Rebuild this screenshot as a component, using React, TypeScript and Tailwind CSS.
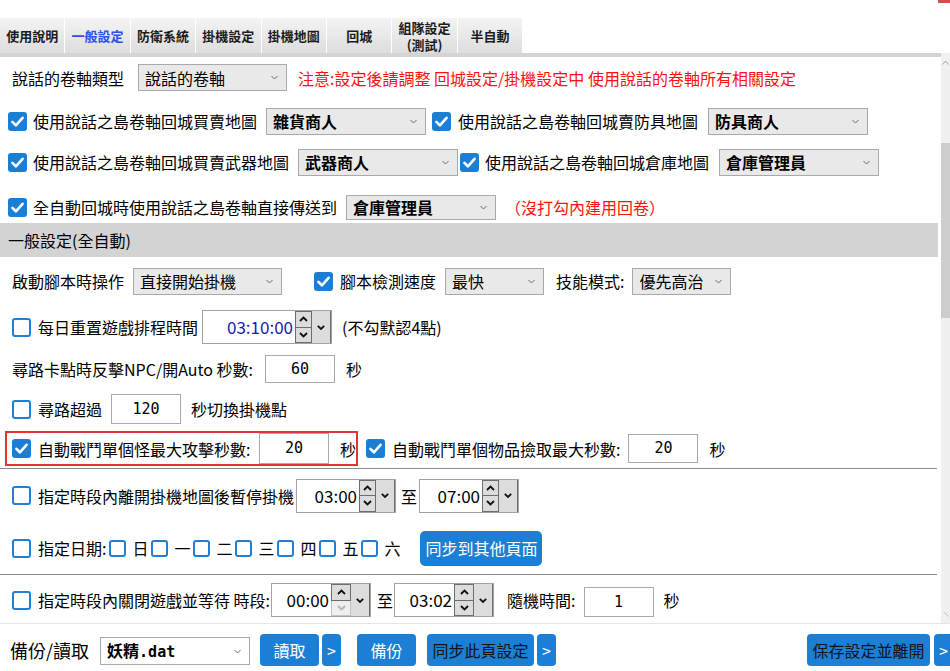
import React from "react";

const FONT = "font-['Noto_Sans_CJK_TC','Noto_Sans_CJK_SC',sans-serif]";
const MONO = "font-['DejaVu_Sans_Mono',monospace]";

function Tick() {
  return (
    <svg viewBox="0 0 19 19" className="w-full h-full">
      <path d="M4.4 9.9 L7.9 13.3 L14.6 5.8" fill="none" stroke="#fff" strokeWidth="2.6" strokeLinecap="round" strokeLinejoin="round" />
    </svg>
  );
}

function Box({ on, small }: { on?: boolean; small?: boolean }) {
  const size = small ? "w-[17px] h-[17px]" : "w-[19px] h-[19px]";
  return on ? (
    <span className={`${size} shrink-0 rounded-[3px] bg-[#1a7fd4] flex`}>
      <Tick />
    </span>
  ) : (
    <span className={`${size} shrink-0 rounded-[3px] border-2 border-[#1f7fd6] bg-white`} />
  );
}

function Txt({ children, className = "" }: { children: React.ReactNode; className?: string }) {
  return <span className={`text-[16px] leading-[20px] whitespace-nowrap shrink-0 ${className}`}>{children}</span>;
}

function Pick({
  value,
  bold,
  className = "",
  white,
}: {
  value: React.ReactNode;
  bold?: boolean;
  className?: string;
  white?: boolean;
}) {
  return (
    <div
      className={`flex items-center justify-between border border-[#a9a9a9] pl-[6px] pr-[8px] shrink-0 ${
        white ? "bg-white" : "bg-[#e9e9e9]"
      } ${className}`}
    >
      <span className={`text-[16px] leading-[20px] whitespace-nowrap ${bold ? "font-bold" : ""}`}>{value}</span>
      <svg width="7" height="5" viewBox="0 0 7 5">
        <path d="M0.5 1 L3.5 4 L6.5 1" fill="none" stroke="#666" strokeWidth="1" />
      </svg>
    </div>
  );
}

function Num({ value, className = "" }: { value: string; className?: string }) {
  return (
    <div
      className={`w-[70px] border border-[#a9a9a9] bg-white flex items-center justify-center ${MONO} text-[15px] shrink-0 ${className}`}
    >
      {value}
    </div>
  );
}

function Chev({ up, off }: { up?: boolean; off?: boolean }) {
  return (
    <svg width="9" height="6" viewBox="0 0 9 6">
      <path
        d={up ? "M1 5 L4.5 1.5 L8 5" : "M1 1 L4.5 4.5 L8 1"}
        fill="none"
        stroke={off ? "#b5b5b5" : "#111"}
        strokeWidth="1.8"
      />
    </svg>
  );
}

function Time({
  value,
  className = "",
  blue,
  downOff,
  spin = "w-[17px]",
}: {
  value: string;
  className?: string;
  blue?: boolean;
  downOff?: boolean;
  spin?: string;
}) {
  return (
    <div className={`flex h-[34px] border border-[#a3a3a3] bg-white shrink-0 ${className}`}>
      <div
        className={`flex-1 flex items-center justify-end pr-[2px] text-[17px] leading-[20px] ${
          blue ? "text-[#1a1aa8]" : "text-black"
        }`}
      >
        {value}
      </div>
      <div className={`${spin} flex flex-col`}>
        <div className="flex-1 border border-[#6d6d6d] bg-[#dcdcdc] flex items-center justify-center">
          <Chev up />
        </div>
        <div
          className={`flex-1 border border-t-0 flex items-center justify-center ${
            downOff ? "border-[#c4c4c4] bg-[#efefef]" : "border-[#6d6d6d] bg-[#dcdcdc]"
          }`}
        >
          <Chev off={downOff} />
        </div>
      </div>
      <div className="w-[19px] bg-[#dcdcdc] border-r border-[#6d6d6d] flex items-center justify-center">
        <svg width="8" height="5" viewBox="0 0 8 5">
          <path d="M0.8 0.8 L4 4 L7.2 0.8" fill="none" stroke="#111" strokeWidth="1.8" />
        </svg>
      </div>
    </div>
  );
}

function Btn({
  children,
  className = "",
  dark,
}: {
  children: React.ReactNode;
  className?: string;
  dark?: boolean;
}) {
  return (
    <div
      className={`h-[32px] rounded-[4px] bg-[#1b7fd6] flex items-center justify-center text-[16px] leading-[20px] whitespace-nowrap shrink-0 ${
        dark ? "text-[#141414]" : "text-white"
      } ${className}`}
    >
      {children}
    </div>
  );
}

const tabs: { label: React.ReactNode; active?: boolean }[] = [
  { label: "使用說明" },
  { label: "一般設定", active: true },
  { label: "防衛系統" },
  { label: "掛機設定" },
  { label: "掛機地圖" },
  { label: "回城" },
  {
    label: (
      <>
        <span className="block">組隊設定</span>
        <span className="block">(測試)</span>
      </>
    ),
  },
  { label: "半自動" },
];

const days = ["日", "一", "二", "三", "四", "五", "六"];

export default function App() {
  return (
    <div className={`w-[950px] h-[671px] bg-white text-black overflow-hidden flex flex-col ${FONT}`}>
      {/* window top edge */}
      <div className="h-[18px] flex justify-end shrink-0">
        <div className="w-[12px] h-[3px] bg-[#d05050]" />
      </div>

      {/* tab strip */}
      <div className="h-[35px] flex shrink-0">
        {tabs.map((t, i) => (
          <div
            key={i}
            className={`w-[65.4px] h-full border-r border-white bg-linear-to-b from-[#f4f4f4] to-[#dddddd] flex flex-col items-center justify-center text-center text-[13px] leading-[17px] font-bold ${
              t.active ? "text-[#2f4fe8]" : "text-[#1c1c1c]"
            }`}
          >
            {t.label}
          </div>
        ))}
      </div>

      {/* scrolling settings area */}
      <div className="h-[570px] flex shrink-0">
        <div className="w-[941px] flex flex-col">
          <div className="h-[4px] bg-[#d4d4d4] shrink-0" />
          <div className="w-[938px] flex flex-col">
            {/* scroll type */}
            <div className="h-[41px] flex items-center pl-[12px]">
              <Txt>說話的卷軸類型</Txt>
              <Pick value="說話的卷軸" className="ml-[14px] w-[149px] h-[27px]" />
              <Txt className="ml-[11px] text-[#ff1010]">注意:設定後請調整 回城設定/掛機設定中 使用說話的卷軸所有相關設定</Txt>
            </div>

            <div className="h-[46px] flex items-center pl-[8px]">
              <Box on />
              <Txt className="ml-[6px]">使用說話之島卷軸回城買賣地圖</Txt>
              <Pick value="雜貨商人" bold className="ml-[9px] w-[160px] h-[27px]" />
              <span className="ml-[6px]">
                <Box on />
              </span>
              <Txt className="ml-[7px]">使用說話之島卷軸回城賣防具地圖</Txt>
              <Pick value="防具商人" bold className="ml-[10px] w-[160px] h-[27px]" />
            </div>

            <div className="h-[36px] flex items-center pl-[8px]">
              <Box on />
              <Txt className="ml-[6px]">使用說話之島卷軸回城買賣武器地圖</Txt>
              <Pick value="武器商人" bold className="ml-[9px] w-[160px] h-[27px]" />
              <span className="ml-[2px]">
                <Box on />
              </span>
              <Txt className="ml-[6px]">使用說話之島卷軸回城倉庫地圖</Txt>
              <Pick value="倉庫管理員" bold className="ml-[10px] w-[160px] h-[27px]" />
            </div>

            <div className="h-[43px] flex items-center pl-[8px] pt-[11px]">
              <Box on />
              <Txt className="ml-[6px]">全自動回城時使用說話之島卷軸直接傳送到</Txt>
              <Pick value="倉庫管理員" bold className="ml-[9px] w-[150px] h-[25px]" />
              <Txt className="ml-[9px] text-[#ff1010]">（沒打勾內建用回卷）</Txt>
            </div>

            {/* section header */}
            <div className="h-[34px] bg-[#d3d3d3] flex items-center pl-[8px]">
              <Txt>一般設定(全自動)</Txt>
            </div>

            <div className="h-[48px] flex items-center pl-[12px]">
              <Txt>啟動腳本時操作</Txt>
              <Pick value="直接開始掛機" className="ml-[9px] w-[149px] h-[27px]" />
              <span className="ml-[32px]">
                <Box on />
              </span>
              <Txt className="ml-[7px]">腳本檢測速度</Txt>
              <Pick value="最快" className="ml-[9px] w-[99px] h-[27px]" />
              <Txt className="ml-[12px]">技能模式:</Txt>
              <Pick value="優先高治" className="ml-[8px] w-[99px] h-[27px]" />
            </div>

            <div className="h-[44px] flex items-center pl-[12px]">
              <Box />
              <Txt className="ml-[7px]">每日重置遊戲排程時間</Txt>
              <Time value="03:10:00" blue className="ml-[4px] w-[130px]" />
              <Txt className="ml-[10px]">(不勾默認4點)</Txt>
            </div>

            <div className="h-[40px] flex items-center pl-[12px]">
              <Txt className="w-[253px]">尋路卡點時反擊NPC/開Auto 秒數:</Txt>
              <Num value="60" className="h-[28px]" />
              <Txt className="ml-[11px]">秒</Txt>
            </div>

            <div className="h-[40px] flex items-center pl-[12px]">
              <Box />
              <Txt className="ml-[7px]">尋路超過</Txt>
              <Num value="120" className="ml-[9px] w-[69px] h-[30px]" />
              <Txt className="ml-[10px]">秒切換掛機點</Txt>
            </div>

            <div className="h-[39px] flex items-center">
              <div className="ml-[5px] w-[353px] h-[35px] shrink-0 border-2 border-[#e63232] flex items-center pl-[5px]">
                <Box on />
                <Txt className="ml-[7px] w-[221px]">自動戰鬥單個怪最大攻擊秒數:</Txt>
                <Num value="20" className="h-[31px]" />
                <Txt className="ml-[11px]">秒</Txt>
              </div>
              <span className="ml-[8px]">
                <Box on />
              </span>
              <Txt className="ml-[7px]">自動戰鬥單個物品撿取最大秒數:</Txt>
              <Num value="20" className="ml-[8px] h-[29px]" />
              <Txt className="ml-[11px]">秒</Txt>
            </div>

            <div className="h-px bg-[#8c8c8c] w-[937px]" />

            <div className="h-[53px] flex items-center pl-[12px]">
              <Box />
              <Txt className="ml-[7px]">指定時段內離開掛機地圖後暫停掛機</Txt>
              <Time value="03:00" className="ml-[2px] w-[100px]" />
              <Txt className="ml-[5px]">至</Txt>
              <Time value="07:00" className="ml-[2px] w-[100px]" />
            </div>

            <div className="h-[52px] flex items-center pl-[12px]">
              <Box />
              <Txt className="ml-[7px]">指定日期:</Txt>
              {days.map((d, i) => (
                <span key={d} className={`flex items-center shrink-0 ${i === 0 ? "ml-[3px]" : "ml-0"}`}>
                  <Box small />
                  <Txt className="ml-[6px] w-[19px]">{d}</Txt>
                </span>
              ))}
              <Btn className="ml-[17px] w-[122px] !h-[35px] !rounded-[5px]">同步到其他頁面</Btn>
            </div>

            <div className="h-px bg-[#8c8c8c] w-[937px]" />

            <div className="h-[48px] flex items-start pt-[8px] pl-[12px]">
              <span className="h-[34px] flex items-center shrink-0">
                <Box />
                <Txt className="ml-[7px]">指定時段內關閉遊戲並等待 時段:</Txt>
              </span>
              <Time value="00:00" downOff spin="w-[20px]" className="ml-[1px] w-[100px]" />
              <span className="h-[34px] flex items-center shrink-0">
                <Txt className="ml-[6px]">至</Txt>
              </span>
              <Time value="03:02" spin="w-[20px]" className="ml-[1px] w-[100px]" />
              <span className="h-[34px] flex items-center shrink-0">
                <Txt className="ml-[13px]">隨機時間:</Txt>
                <Num value="1" className="ml-[8px] h-[30px] mt-[4px]" />
                <Txt className="ml-[10px]">秒</Txt>
              </span>
            </div>
          </div>
        </div>

        {/* scrollbar */}
        <div className="w-[9px] bg-[#f0f0f0] flex flex-col items-center">
          <svg className="mt-[7px]" width="7" height="5" viewBox="0 0 7 5">
            <path d="M0.5 4.5 L3.5 1 L6.5 4.5" fill="none" stroke="#a6a6a6" strokeWidth="1" />
          </svg>
          <div className="mt-[78px] w-[9px] h-[175px] bg-[#cdcdcd]" />
          <div className="flex-1" />
          <svg className="mb-[6px]" width="6" height="6" viewBox="0 0 6 6">
            <path d="M0.5 0.5 L5.5 5.5" stroke="#c0c0c0" strokeWidth="1" />
          </svg>
        </div>
      </div>

      <div className="h-px bg-[#e6e6e6] shrink-0" />

      {/* backup / load bar */}
      <div className="h-[47px] flex items-start pt-[10px] pl-[10px] overflow-hidden shrink-0">
        <span className="h-[32px] flex items-center shrink-0">
          <span className="text-[18px] leading-[22px] whitespace-nowrap">備份/讀取</span>
        </span>
        <Pick
          white
          className="ml-[11px] w-[150px] h-[28px] mt-[3px]"
          value={
            <span className="font-bold">
              妖精<span className={`${MONO} text-[15px]`}>.dat</span>
            </span>
          }
        />
        <Btn className="ml-[10px] w-[59px]">讀取</Btn>
        <Btn className="ml-[3px] w-[19px] text-[13px]">&gt;</Btn>
        <Btn className="ml-[16px] w-[59px]">備份</Btn>
        <Btn dark className="ml-[11px] w-[107px]">同步此頁設定</Btn>
        <Btn className="ml-[3px] w-[19px] text-[13px]">&gt;</Btn>
        <Btn dark className="ml-[251px] w-[123px]">保存設定並離開</Btn>
        <Btn className="ml-[4px] w-[19px] text-[13px]">&gt;</Btn>
      </div>
    </div>
  );
}
